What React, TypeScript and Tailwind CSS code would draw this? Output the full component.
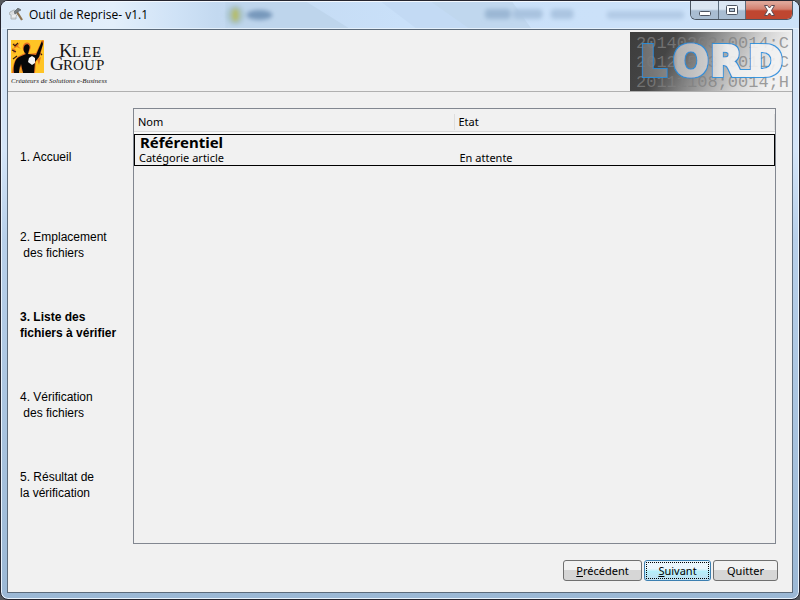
import type { ReactNode } from "react";

const UI_FONT = "font-['Noto_Sans','Open_Sans',sans-serif]";

function ToolIcon() {
  return (
    <svg width="15" height="14" viewBox="0 0 15 14" aria-hidden="true">
      <path d="M1 4 5 2l3 1 1 3-2 2v3H2V7L0 6Z" fill="#d9dcdf" stroke="#a5a9ac" strokeWidth=".8" />
      <path d="M3 8h4M4 5l3-1" stroke="#fff" />
      <path d="m8 4 5 8" stroke="#8c7352" strokeWidth="2.2" />
      <path d="M5 4 9 0l3 2-2 1-4 3Z" fill="#777d80" stroke="#565b5e" strokeWidth=".6" />
    </svg>
  );
}

function TitleBackdrop() {
  return (
    <svg className="absolute inset-0 h-full w-full" viewBox="0 0 800 28" preserveAspectRatio="none" aria-hidden="true">
      <defs>
        <filter id="soft" x="-30%" y="-80%" width="160%" height="260%">
          <feGaussianBlur stdDeviation="2.2" />
        </filter>
        <linearGradient id="bar">
          <stop offset="0" stopColor="#dceaf9" />
          <stop offset=".14" stopColor="#e3effb" />
          <stop offset=".22" stopColor="#cfe2f6" />
          <stop offset=".27" stopColor="#c3d9f0" />
          <stop offset=".5" stopColor="#c9e0f9" />
          <stop offset="1" stopColor="#cde2f9" />
        </linearGradient>
      </defs>
      <rect width="800" height="28" fill="url(#bar)" />
      <path d="M225 0h80l45 28H225Z" fill="#bed5ec" />
      <path d="M429 0h83l20 28h-66Z" fill="#c0d7ee" />
      <path d="M380 0h50l40 28h-53Z" fill="#c3daf4" />
      <g filter="url(#soft)">
        <ellipse cx="235" cy="14" rx="9" ry="10" fill="#a9c4cf" />
        <ellipse cx="235" cy="14" rx="4" ry="7" fill="#b4bd6a" />
        <ellipse cx="259" cy="14" rx="13" ry="5" fill="#7798bb" />
        <rect x="485" y="8" width="26" height="10" rx="4" fill="#9bb7d4" />
        <rect x="513" y="8" width="30" height="10" rx="4" fill="#a9c3df" />
        <rect x="551" y="8" width="23" height="10" rx="4" fill="#abc5e1" />
        <rect x="607" y="10" width="78" height="8" rx="4" fill="#b2cbe6" />
      </g>
      <path d="M0 .5h800" stroke="#f3f8fe" />
      <path d="M0 27.500h800" stroke="#e4f0fb" />
    </svg>
  );
}

function KleeLogo() {
  return (
    <svg width="106" height="48" viewBox="0 0 106 48" role="img" aria-label="Klee Group">
      <rect x="1" y="1" width="33" height="33" fill="#ffc425" />
      <path d="m4 4 3 2 3-3-2 4 3 3-4-2-4 2 2-3ZM2 9l4 2-2 4ZM27 20l4-2-2 8Z" fill="#e9781d" />
      <path d="M3 5 5 7 8 4M2 11l4 2M29 13l3 3M3 20l4-3" stroke="#3b1d10" strokeWidth="1.2" fill="none" />
      <path d="M2 34c1-7 2-14 7-17l6-3c-3-3-3-8 0-10 4-2 7 2 5 7l-2 4 8-1 6-13 2 1-4 15-4 5-1 12Z" fill="#e56f20" />
      <path d="M4 34c-1-7 1-14 5-16l7-3c-3-2-3-7-1-9 3-2 6 1 4 5l-1 4 8 1 6-14 1 3-4 13-4 5-1 11H13l-2-9-2 9Z" fill="#080808" />
      <path d="m19 19 3-2 3 2v5l-3 2-4-3Z" fill="#f5f5f5" />
      <path d="m9 34 1-7 3 7Z" fill="#f3a525" />
      <g fill="#151515" fontFamily="'Liberation Serif', serif">
        <text y="18" fontSize="19">
          <tspan x="49">K</tspan>
          <tspan fontSize="15" x="62 72 82">LEE</tspan>
        </text>
        <text y="31" fontSize="19">
          <tspan x="40">G</tspan>
          <tspan fontSize="15" x="53 63 74 86">ROUP</tspan>
        </text>
        <text x="1" y="44" fontSize="7" fontStyle="italic">
          Créateurs de Solutions e-Business
        </text>
      </g>
    </svg>
  );
}

function LordBanner() {
  return (
    <svg width="161" height="59" viewBox="0 0 161 59" role="img" aria-label="LORD">
      <defs>
        <linearGradient id="shade" x1="0" y1="0" x2="1" y2=".2">
          <stop offset="0" stopColor="#3d3d3d" />
          <stop offset=".28" stopColor="#454545" />
          <stop offset=".5" stopColor="#858585" />
          <stop offset=".8" stopColor="#d0d0d0" />
          <stop offset="1" stopColor="#f1f1f1" />
        </linearGradient>
        <linearGradient id="letters" gradientUnits="userSpaceOnUse" x1="12" y1="0" x2="155" y2="0">
          <stop offset="0" stopColor="#737373" />
          <stop offset=".2" stopColor="#8c8c8c" />
          <stop offset=".25" stopColor="#bdbdbd" />
          <stop offset=".48" stopColor="#d5d5d5" />
          <stop offset=".6" stopColor="#f3f3f3" />
        </linearGradient>
        <filter id="outline" x="-5%" y="-10%" width="110%" height="120%">
          <feMorphology in="SourceAlpha" operator="dilate" radius="1" result="grown" />
          <feFlood floodColor="#2a90de" />
          <feComposite in2="grown" operator="in" result="edge" />
          <feMerge>
            <feMergeNode in="edge" />
            <feMergeNode in="SourceGraphic" />
          </feMerge>
        </filter>
      </defs>
      <rect width="161" height="59" fill="url(#shade)" />
      <g fill="#808080" fillOpacity=".75" fontFamily="'Liberation Mono', monospace" fontSize="17">
        <text x="6" y="16">20140203;0014;C</text>
        <text x="6" y="35">20120513;0011;C</text>
        <text x="6" y="55">20111108;0014;H</text>
      </g>
      <g filter="url(#outline)" fill="url(#letters)" stroke="url(#letters)" opacity=".9">
        <text
          x="10 43 80 118"
          y="44"
          fontFamily="'DejaVu Sans', sans-serif"
          fontWeight="bold"
          fontSize="42"
          strokeWidth="2"
        >
          LORD
        </text>
        <path d="M106 39h18v5h-16Z" strokeWidth="2" />
      </g>
    </svg>
  );
}

function CaptionButtons() {
  const plain =
    "flex items-center justify-center border-r border-[#5d6c7c] bg-linear-to-b from-[#dbe6f2] from-45% to-[#a9bdd2] to-55%";
  return (
    <div className="relative mr-1.5 flex h-[19px] overflow-hidden rounded-b-md border border-t-0 border-[#4b5662]">
      <button type="button" aria-label="Réduire" className={`${plain} w-7`}>
        <svg width="12" height="5" viewBox="0 0 12 5" className="mt-1.5" aria-hidden="true">
          <rect x=".5" y=".5" width="11" height="4" rx="1" fill="#fff" stroke="#4d5562" />
        </svg>
      </button>
      <button type="button" aria-label="Agrandir" className={`${plain} w-[27px]`}>
        <svg width="12" height="10" viewBox="0 0 12 10" aria-hidden="true">
          <rect x=".5" y=".5" width="11" height="9" rx="1" fill="#fff" stroke="#4d5562" />
          <rect x="3.5" y="3.5" width="5" height="3" fill="#b5c6d8" stroke="#4d5562" />
        </svg>
      </button>
      <button
        type="button"
        aria-label="Fermer"
        className="flex w-[46px] items-center justify-center bg-linear-to-b from-[#dfa597] from-10% via-[#d3806f] via-45% to-[#bf4630] to-55%"
      >
        <svg width="13" height="11" viewBox="0 0 13 11" aria-hidden="true">
          <path d="M1.500 .5h3l2 2.500 2-2.500h3L8.500 5.500l3 5h-3l-2-2.500-2 2.500h-3l3-5Z" fill="#fff" stroke="#5b4a52" />
        </svg>
      </button>
    </div>
  );
}

const steps = [
  { text: "1. Accueil", active: false },
  { text: "2. Emplacement\n des fichiers", active: false },
  { text: "3. Liste des\nfichiers à vérifier", active: true },
  { text: "4. Vérification\n des fichiers", active: false },
  { text: "5. Résultat de\nla vérification", active: false },
];

function WizardButton({ children, className }: { children: ReactNode; className: string }) {
  return (
    <button type="button" className={`h-[21px] rounded-[3px] border text-[11px] leading-4 ${className}`}>
      {children}
    </button>
  );
}

export default function App() {
  const grey = "border-[#707070] bg-linear-to-b from-[#f2f2f2] from-45% to-[#d6d6d6] to-50%";
  return (
    <div className="min-h-screen bg-[#55585c]">
      <div
        className={`flex min-h-screen flex-col overflow-hidden rounded-lg border border-[#25252f] bg-linear-to-b from-[#d4e5f8] from-25% via-[#b8d0ea] via-40% to-[#9bb8d5] text-black inset-shadow-[0_0_0_1px_#e9f3fd] ${UI_FONT}`}
      >
        <header className="relative flex h-7 items-start justify-between">
          <TitleBackdrop />
          <div className="relative flex h-7 items-center gap-[5px] pl-2">
            <ToolIcon />
            <h1 className="font-['Open_Sans',sans-serif] text-xs">Outil de Reprise- v1.1</h1>
          </div>
          <CaptionButtons />
        </header>

        <main className="mx-1.5 mb-1.5 flex grow flex-col border border-[#5c6b7b] bg-[#f1f1f1]">
          <div className="flex h-[62px] items-start justify-between border-b border-[#b0b0b0] pt-[2px] pr-px">
            <div className="pt-[7px] pl-[2px]">
              <KleeLogo />
            </div>
            <LordBanner />
          </div>

          <div className="flex grow pt-4 pr-4">
            <nav aria-label="Étapes" className="w-[125px] shrink-0 pt-[41px] pl-3">
              <ol className="flex flex-col font-['Liberation_Sans',Arial,sans-serif] text-xs leading-4">
                {steps.map((s) => (
                  <li
                    key={s.text}
                    aria-current={s.active ? "step" : undefined}
                    className={`h-20 whitespace-pre last:h-auto ${s.active ? "font-bold" : ""}`}
                  >
                    {s.text}
                  </li>
                ))}
              </ol>
            </nav>
            <div className="grow border border-[#828790]">
              <table className="w-full table-fixed border-separate border-spacing-0 text-left text-[11px] leading-4">
                <thead>
                  <tr className="h-[25px]">
                    <th className="w-1/2 border-b-2 border-[#fafafa] p-0 font-normal">
                      <div className="h-[23px] border-b border-[#d9d9d9] pt-[5px] pl-1">
                        <div className="border-r border-[#dedede]">Nom</div>
                      </div>
                    </th>
                    <th className="border-b-2 border-[#fafafa] p-0 font-normal">
                      <div className="h-[23px] border-b border-[#d9d9d9] pt-[5px] pl-1">
                        <div className="border-r border-[#dedede]">Etat</div>
                      </div>
                    </th>
                  </tr>
                </thead>
                <tbody>
                  <tr className="h-8 align-bottom">
                    <td className="border-y border-l border-black py-0 pl-1">
                      <strong className="block pl-px text-[15px] leading-[15px]">Référentiel</strong>
                      <span className="block leading-[15px]">Catégorie article</span>
                    </td>
                    <td className="border-y border-r border-black py-0 pl-[5px] leading-[15px]">En attente</td>
                  </tr>
                </tbody>
              </table>
            </div>
          </div>

          <div className="flex justify-end gap-[2px] pt-4 pr-[14px] pb-[11px]">
            <WizardButton className={`w-[79px] ${grey}`}>
              <u>P</u>récédent
            </WizardButton>
            <WizardButton className="w-[67px] border-[#3c7fb1] bg-linear-to-b from-[#eaf6fd] from-40% via-[#b5effa] via-55% to-[#c0dff0] p-px">
              <span className="block h-[17px] border border-dotted border-black leading-[15px]">
                <u>S</u>uivant
              </span>
            </WizardButton>
            <WizardButton className={`w-[65px] ${grey}`}>Quitter</WizardButton>
          </div>
        </main>
      </div>
    </div>
  );
}
